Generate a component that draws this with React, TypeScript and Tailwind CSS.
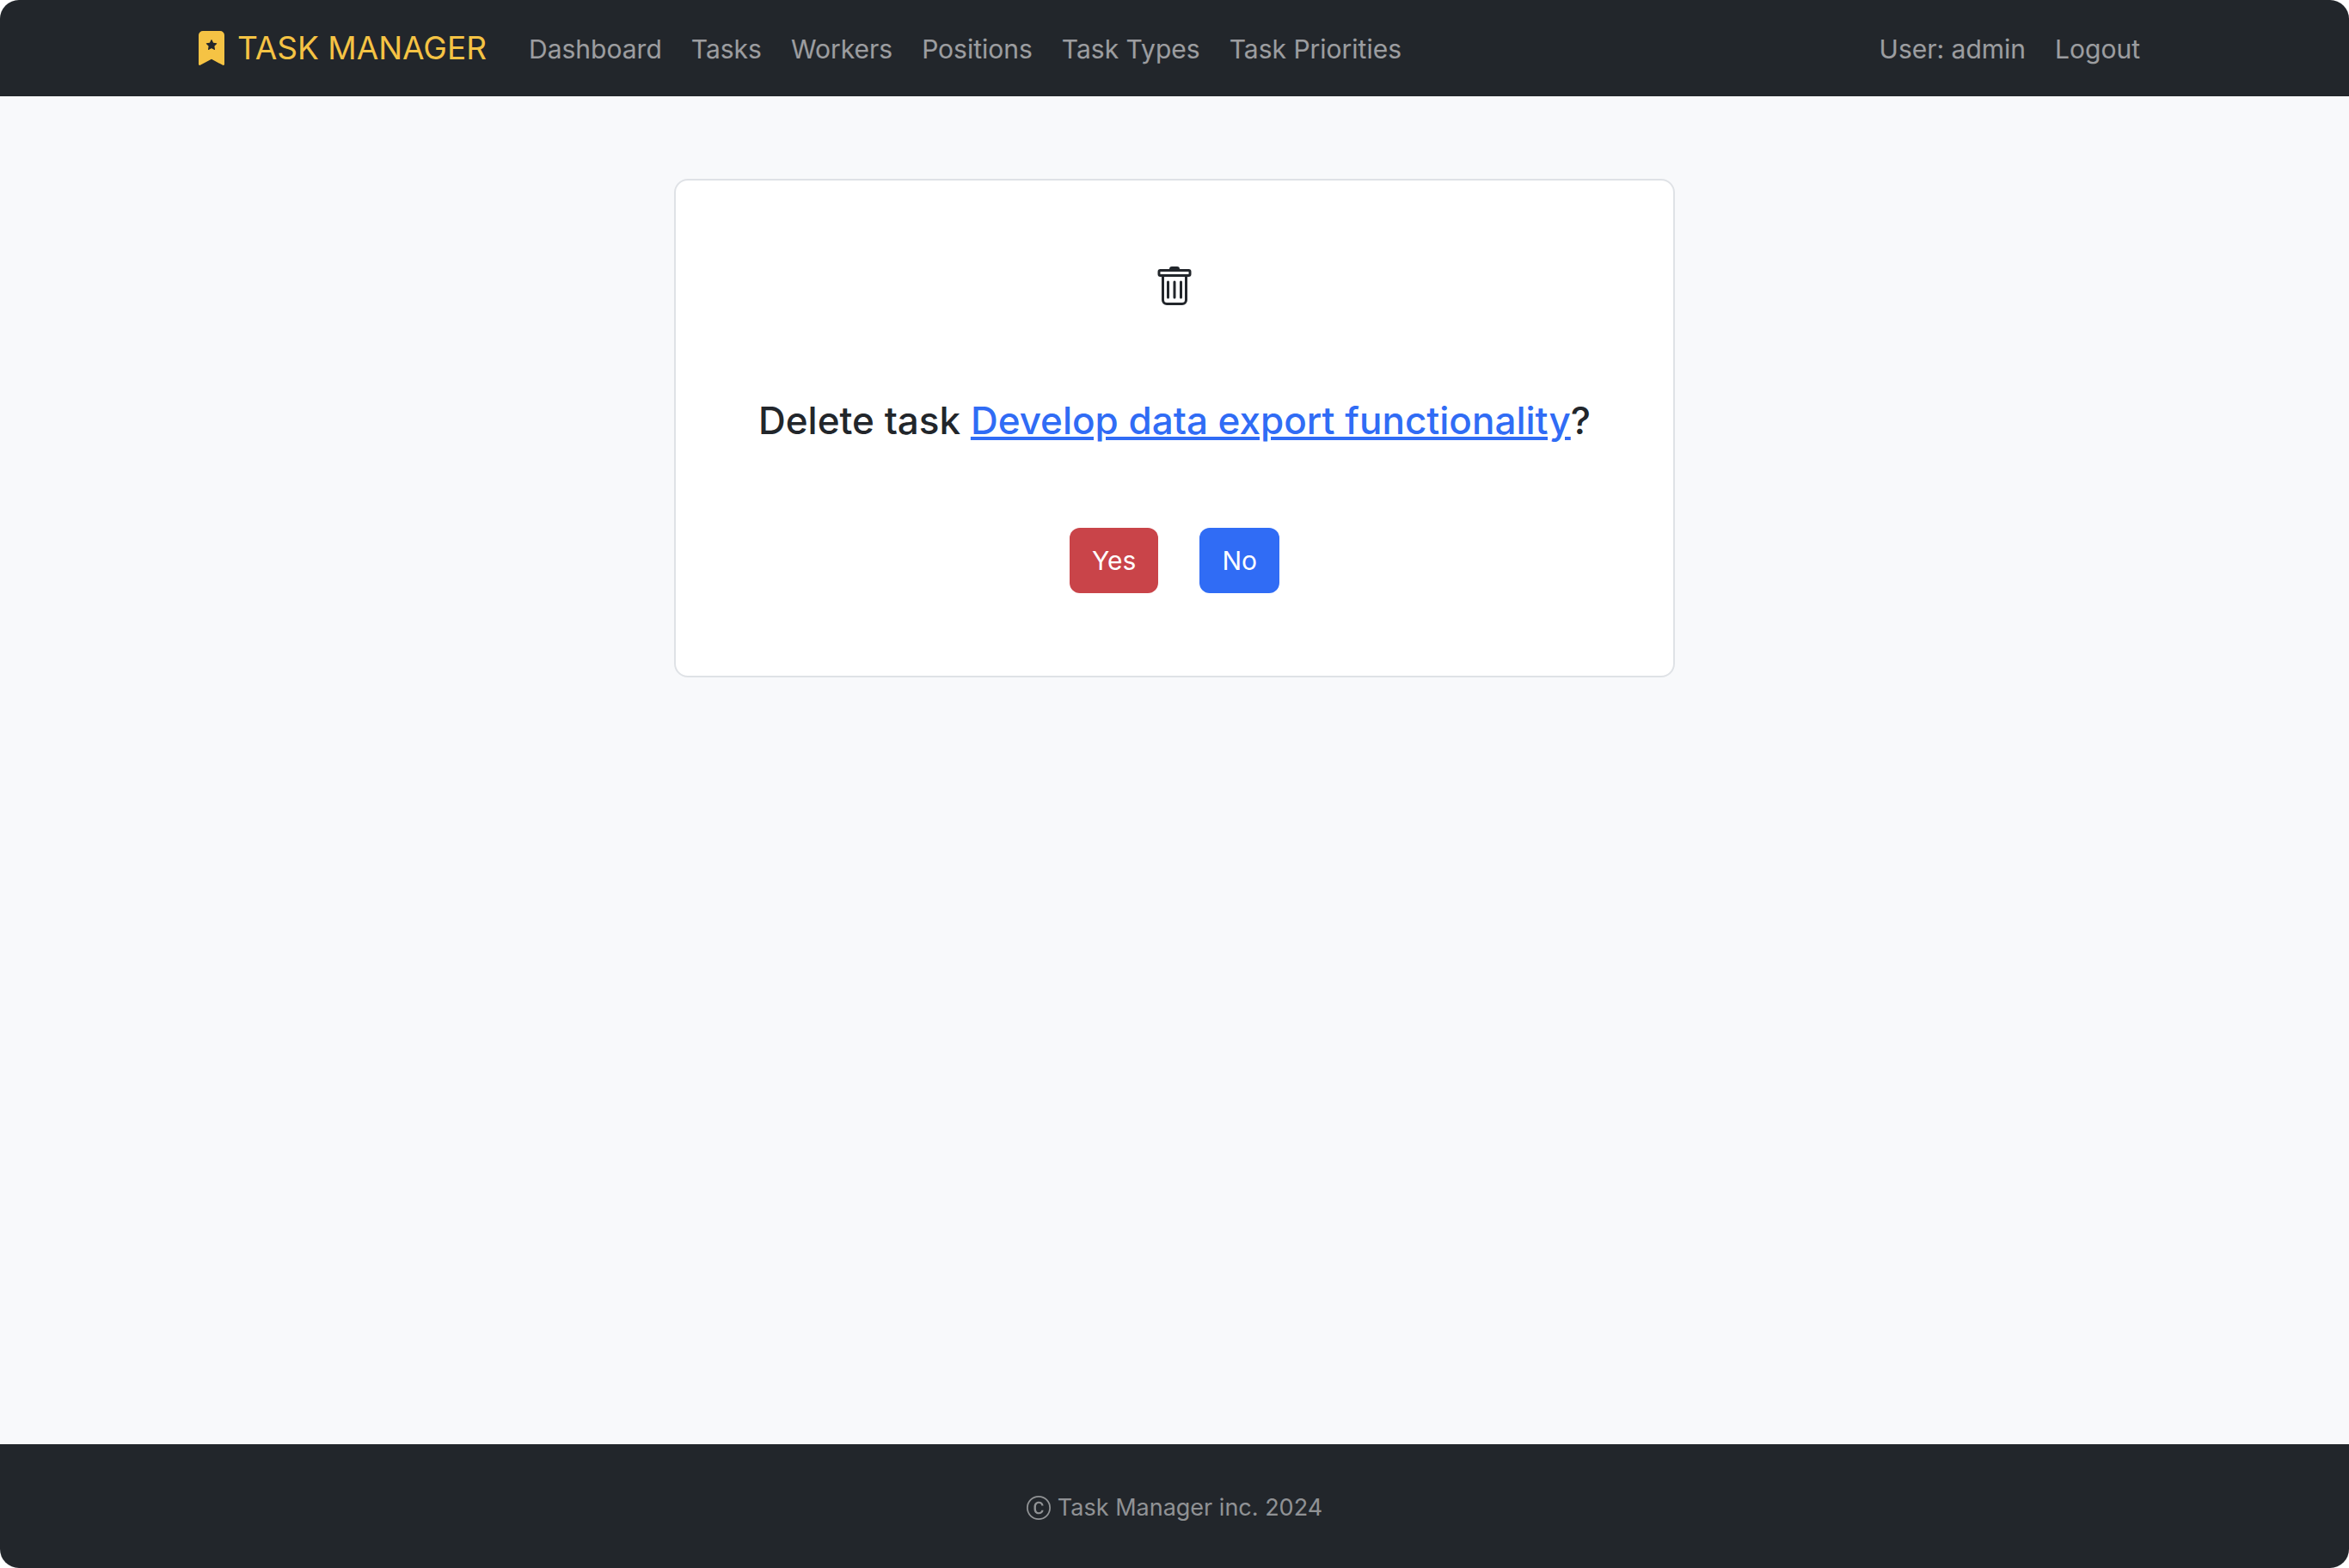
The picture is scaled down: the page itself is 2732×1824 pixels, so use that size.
import { BsBookmarkStarFill, BsCCircle, BsTrash } from "react-icons/bs";

const links = ["Dashboard", "Tasks", "Workers", "Positions", "Task Types", "Task Priorities"];

function NavLink({ label }: { label: string }) {
  return (
    <li>
      <a href="#" className="block px-[17px] pt-[18px] pb-4 text-[30px] leading-[48px] text-white/55 hover:text-white/75">
        {label}
      </a>
    </li>
  );
}

function Navbar() {
  return (
    <header className="bg-[#22262b]">
      <nav className="mx-auto flex h-28 max-w-[2280px] items-center whitespace-nowrap">
        <a href="#" className="mr-8 flex items-center gap-[10px] text-[37px] leading-[60px] text-[#f5c344]">
          <BsBookmarkStarFill className="size-10" />
          TASK MANAGER
        </a>
        <ul className="flex">
          {links.map((label) => (
            <NavLink key={label} label={label} />
          ))}
        </ul>
        <ul className="ml-auto flex">
          <NavLink label="User: admin" />
          <NavLink label="Logout" />
        </ul>
      </nav>
    </header>
  );
}

function DeleteCard() {
  return (
    <section className="flex flex-col items-center gap-24 rounded-2xl border-2 border-[#dfe2e6] bg-white p-24 text-[#22262b]">
      <div className="h-[58px] pt-1">
        <BsTrash className="size-12" />
      </div>
      <h1 className="text-[44px] leading-[58px] font-medium">
        Delete task{" "}
        <a href="#" className="text-[#306cf5] underline">
          Develop data export functionality
        </a>
        ?
      </h1>
      <div className="flex gap-12 text-[30px] leading-[48px] text-white">
        <button type="button" className="rounded-xl bg-[#c94449] px-[26px] py-[14px]">
          Yes
        </button>
        <button type="button" className="rounded-xl bg-[#306cf5] px-[26px] py-[14px]">
          No
        </button>
      </div>
    </section>
  );
}

export default function App() {
  return (
    <div className="min-h-screen bg-white font-['Inter','Liberation_Sans',sans-serif]">
      <div className="flex min-h-screen flex-col overflow-hidden rounded-[22px] bg-[#f8f9fb]">
        <Navbar />
        <main className="flex flex-1 items-start justify-center pt-24">
          <DeleteCard />
        </main>
        <footer className="flex h-36 items-center justify-center gap-2 bg-[#22262b] pt-1 text-[27px] leading-[42px] text-white/50">
          <BsCCircle className="size-7" />
          <p>Task Manager inc. 2024</p>
        </footer>
      </div>
    </div>
  );
}
